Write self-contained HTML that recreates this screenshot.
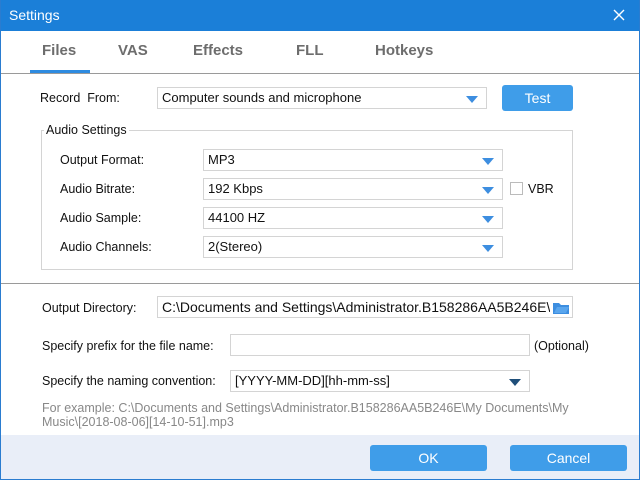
<!DOCTYPE html>
<html><head><style>
*{margin:0;padding:0;box-sizing:border-box}
body{width:640px;height:480px;overflow:hidden;background:#fff;font-family:"Liberation Sans",sans-serif;font-size:12.5px;color:#111;position:relative}
.a{position:absolute;white-space:nowrap}
.win{position:absolute;left:0;top:0;width:640px;height:480px;border:1px solid #2a7cd0;border-top:none}
.tb{left:0;top:0;width:640px;height:31px;background:#1b7fd8;color:#fff;font-size:14px;line-height:31px;padding-left:9px}
.tab{top:42px;font-size:15px;font-weight:bold;color:#6d6d6d}
.box{border:1px solid #d4d4d4;background:#fff;height:22px;line-height:20px;padding-left:4px;font-size:13px}
.arr{position:absolute;right:8px;top:8px;width:0;height:0;border-left:6px solid transparent;border-right:6px solid transparent;border-top:7px solid #3d8ee0}
.btn{background:#3f9de9;color:#fff;text-align:center;border-radius:3px;font-size:14px}
.lbl{font-size:12.5px}
</style></head><body>
<div class="a tb">Settings</div>
<svg class="a" style="left:613px;top:9px" width="12" height="12"><path d="M1 1L11 11M11 1L1 11" stroke="#fff" stroke-width="1.4"/></svg>
<div class="a tab" style="left:42px">Files</div>
<div class="a tab" style="left:118px">VAS</div>
<div class="a tab" style="left:193px">Effects</div>
<div class="a tab" style="left:296px">FLL</div>
<div class="a tab" style="left:375px">Hotkeys</div>
<div class="a" style="left:0;top:73px;width:640px;height:1px;background:#9a9a9a"></div>
<div class="a" style="left:30px;top:70px;width:60px;height:3px;background:#2e8be0"></div>

<div class="a lbl" style="left:40px;top:91px">Record&nbsp; From:</div>
<div class="a box" style="left:157px;top:87px;width:330px">Computer sounds and microphone<div class="arr"></div></div>
<div class="a btn" style="left:502px;top:85px;width:71px;height:26px;line-height:26px">Test</div>

<div class="a" style="left:41px;top:130px;width:532px;height:140px;border:1px solid #d4d4d4"></div>
<div class="a lbl" style="left:44px;top:123px;background:#fff;padding:0 2px">Audio Settings</div>
<div class="a lbl" style="left:60px;top:153px">Output Format:</div>
<div class="a box" style="left:203px;top:149px;width:300px">MP3<div class="arr"></div></div>
<div class="a lbl" style="left:60px;top:182px">Audio Bitrate:</div>
<div class="a box" style="left:203px;top:178px;width:300px">192 Kbps<div class="arr"></div></div>
<div class="a" style="left:510px;top:182px;width:13px;height:13px;border:1px solid #bbb"></div>
<div class="a lbl" style="left:528px;top:182px">VBR</div>
<div class="a lbl" style="left:60px;top:211px">Audio Sample:</div>
<div class="a box" style="left:203px;top:207px;width:300px">44100 HZ<div class="arr"></div></div>
<div class="a lbl" style="left:60px;top:240px">Audio Channels:</div>
<div class="a box" style="left:203px;top:236px;width:300px">2(Stereo)<div class="arr"></div></div>

<div class="a" style="left:0;top:283px;width:640px;height:1px;background:#9a9a9a"></div>

<div class="a lbl" style="left:42px;top:301px">Output Directory:</div>
<div class="a box" style="left:157px;top:296px;width:416px;font-size:14px;overflow:hidden">C:\Documents and Settings\Administrator.B158286AA5B246E\My
<div style="position:absolute;right:0;top:0;width:22px;height:20px;background:#fff"></div>
<svg style="position:absolute;right:3px;top:4px" width="16" height="13"><path d="M0 2h6l2 2h8v9H0z" fill="#3d8ee0"/><path d="M1 12l3-6h12l-3 6z" fill="#5aa6ee"/></svg></div>
<div class="a lbl" style="left:42px;top:339px">Specify prefix for the file name:</div>
<div class="a box" style="left:230px;top:334px;width:300px"></div>
<div class="a lbl" style="left:534px;top:339px">(Optional)</div>
<div class="a lbl" style="left:42px;top:374px">Specify the naming convention:</div>
<div class="a box" style="left:230px;top:370px;width:300px">[YYYY-MM-DD][hh-mm-ss]<div class="arr" style="border-top-color:#1f4f7a"></div></div>
<div class="a lbl" style="left:42px;top:401px;color:#888">For example: C:\Documents and Settings\Administrator.B158286AA5B246E\My Documents\My</div>
<div class="a lbl" style="left:42px;top:415px;color:#888">Music\[2018-08-06][14-10-51].mp3</div>

<div class="a" style="left:0;top:435px;width:640px;height:45px;background:#e9eef8"></div>
<div class="a btn" style="left:370px;top:445px;width:117px;height:26px;line-height:26px">OK</div>
<div class="a btn" style="left:510px;top:445px;width:117px;height:26px;line-height:26px">Cancel</div>
<div class="win"></div>
</body></html>
